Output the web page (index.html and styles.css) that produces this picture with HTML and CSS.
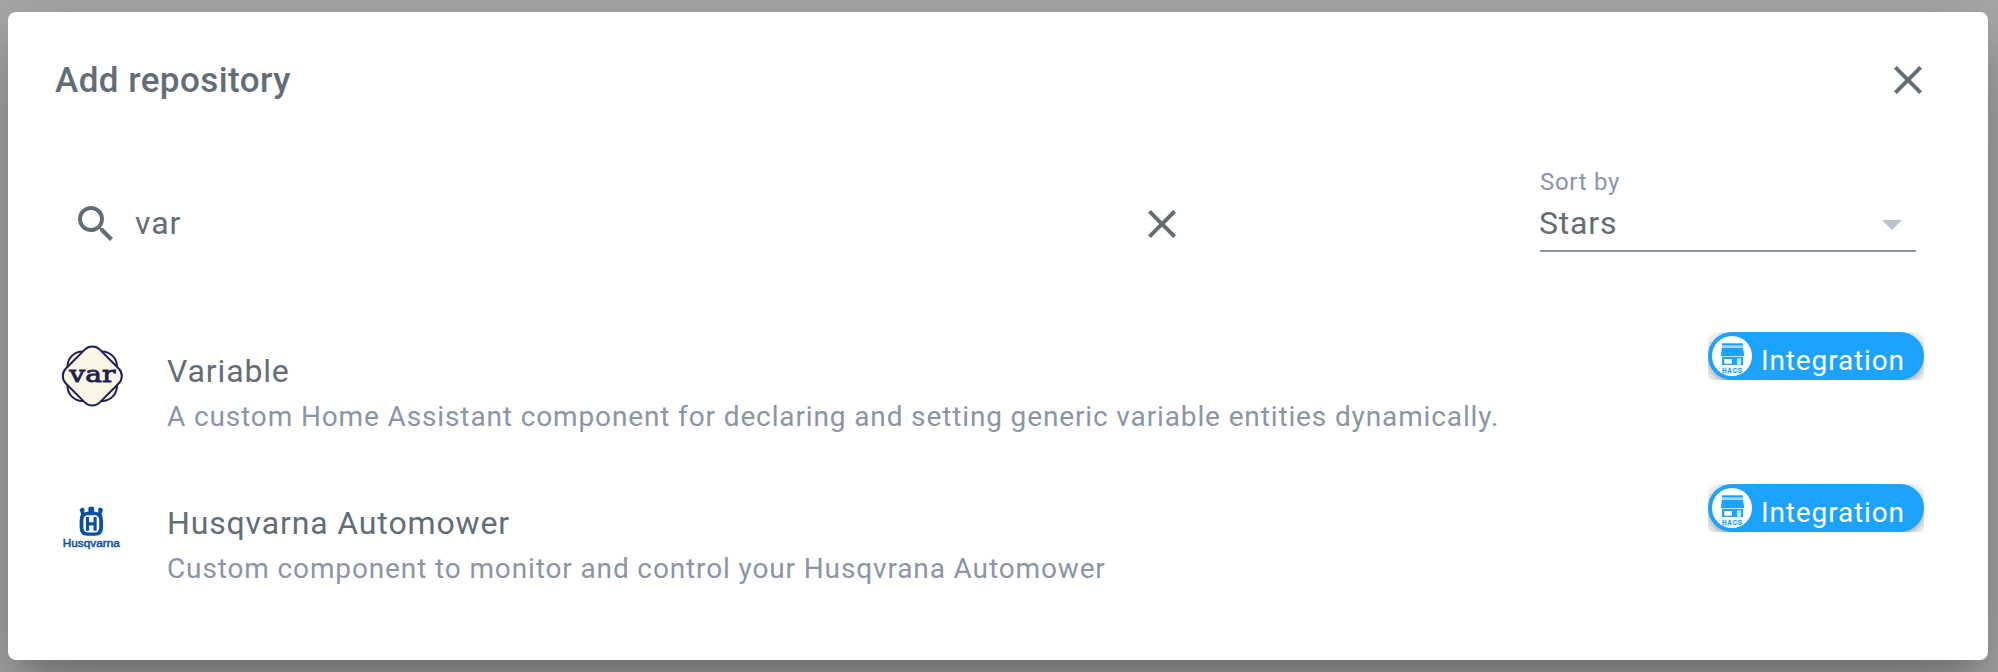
FILE: index.html
```html
<!DOCTYPE html>
<html lang="en">
<head>
<meta charset="utf-8">
<title>Add repository</title>
<link rel="stylesheet" href="styles.css">
</head>
<body>
<svg width="0" height="0" class="symbols" aria-hidden="true">
  <symbol id="close" viewBox="0 0 24 24"><path d="M19,6.41L17.59,5L12,10.59L6.41,5L5,6.41L10.59,12L5,17.59L6.41,19L12,13.41L17.59,19L19,17.59L13.41,12L19,6.41Z"/></symbol>
  <symbol id="store" viewBox="0 0 40 40">
    <circle cx="20" cy="20" r="20" fill="#fff"/>
    <path fill="#1ba3ff" d="M10 7.300h21v2.400H10z"/>
    <path fill="#a3d8ff" d="M10 9.700h21v2.300H10z"/>
    <path fill="#1ba3ff" d="M10 12h21l1 6v2H9v-2z"/>
    <path fill="#1ba3ff" d="M10 21h21v8h-2v-6.500h-4V29H10z"/>
    <path fill="#fff" d="M12.300 23H20v4.700h-7.700z"/>
    <path fill="#a3d8ff" d="M10 20h21v1H10zM25 22.500h4V29h-4z" fill-opacity=".7"/>
  </symbol>
</svg>
<main class="dialog">
  <header class="header">
    <h1 class="title">Add repository</h1>
    <svg class="icon"><use href="#close"/></svg>
  </header>
  <section class="filters">
    <div class="search">
      <svg class="icon" viewBox="0 0 24 24"><path d="M9.5,3A6.5,6.5 0 0,1 16,9.500C16,11.110 15.410,12.590 14.440,13.730L14.710,14H15.500L20.500,19L19,20.500L14,15.500V14.710L13.730,14.440C12.590,15.410 11.110,16 9.500,16A6.500,6.500 0 0,1 3,9.500A6.500,6.500 0 0,1 9.500,3M9.500,5C7,5 5,7 5,9.500C5,12 7,14 9.500,14C12,14 14,12 14,9.500C14,7 12,5 9.500,5Z"/></svg>
      <span class="query">var</span>
      <svg class="icon"><use href="#close"/></svg>
    </div>
    <div class="sort">
      <span class="sort-label">Sort by</span>
      <div class="sort-value"><span>Stars</span><i class="arrow"></i></div>
    </div>
  </section>
  <section class="list">
    <article class="item">
      <svg class="logo" viewBox="0 0 64 64">
        <g fill="#fdf6e6" stroke="#1c2150" stroke-width="2">
          <rect x="7.500" y="7.500" width="49.500" height="49.500" rx="15"/>
          <rect x="8.300" y="8" width="48" height="48" rx="10.700" transform="rotate(45 32.300 32)"/>
        </g>
        <text x="9.300" y="37.500" textLength="46" lengthAdjust="spacingAndGlyphs" class="var-text">var</text>
      </svg>
      <div class="text"><h2 class="name">Variable</h2><p class="desc">A custom Home Assistant component for declaring and setting generic variable entities dynamically.</p></div>
      <div class="badge"><div class="chip"><svg class="chip-icon" viewBox="0 0 40 40"><use href="#store"/><text x="10" y="37.300" textLength="20.700" lengthAdjust="spacingAndGlyphs" class="store-text">HACS</text></svg><span>Integration</span></div></div>
    </article>
    <article class="item">
      <svg class="logo" viewBox="0 0 64 64">
        <path fill="#0b4fa0" d="M19.500 13.500l2.500-2 2.500 1-.3 4 4.300-1-.2-3.500 1-1.200h4l1 1.200-.2 3.500 4.300 1-.3-4 2.500-1 2.500 2-1.600 4.500q1.500 3 1.500 7v6.500q0 8.200-8 8.200h-7.400q-8 0-8-8.200V25q0-4 1.500-7z"/>
        <rect x="23.400" y="19.200" width="15.800" height="17.400" rx="4.500" fill="#fff"/>
        <path d="M27.500 21v13.800M35.100 21v13.800M27.500 27.900h8" stroke="#0b4fa0" stroke-width="3.100" fill="none"/>
        <text x="2.800" y="50.500" textLength="57" lengthAdjust="spacingAndGlyphs" class="husq-text">Husqvarna</text>
      </svg>
      <div class="text"><h2 class="name">Husqvarna Automower</h2><p class="desc">Custom component to monitor and control your Husqvrana Automower</p></div>
      <div class="badge"><div class="chip"><svg class="chip-icon" viewBox="0 0 40 40"><use href="#store"/><text x="10" y="37.300" textLength="20.700" lengthAdjust="spacingAndGlyphs" class="store-text">HACS</text></svg><span>Integration</span></div></div>
    </article>
  </section>
</main>
</body>
</html>
```
FILE: styles.css
```css
* { box-sizing: border-box; }
html { background: #aaa; }
body {
  margin: 0;
  padding: 12px 10px 12px 8px;
  height: 672px;
  overflow: hidden;
  font-family: Roboto, "Liberation Sans", sans-serif;
  color: #636d76;
}
.symbols { position: absolute; }
.dialog {
  height: 648px;
  background: #fff;
  border-radius: 8px;
  box-shadow: 0 22px 30px -14px rgba(0,0,0,.2), 0 48px 76px 6px rgba(0,0,0,.14), 0 18px 92px 16px rgba(0,0,0,.12);
}
.header {
  height: 136px;
  padding: 0 56px 0 47px;
  display: flex;
  align-items: center;
  justify-content: space-between;
}
.title { margin: 2px 0 0; font-size: 35px; font-weight: 500; line-height: 48px; letter-spacing: .45px; }
.icon { width: 48px; height: 48px; fill: #636d76; display: block; }
.filters {
  height: 184px;
  padding: 16px 72px 0 64px;
  display: flex;
  justify-content: space-between;
}
.search { width: 1114px; height: 120px; display: flex; align-items: center; }
.query { flex: 1; padding-left: 15px; font-size: 32px; letter-spacing: .86px; line-height: 48px; margin-top: -2px; }
.sort { width: 376px; height: 88px; border-bottom: 2px solid #8b95a6; }
.sort-label { display: block; color: #8b95a6; font-size: 24px; line-height: 36px; letter-spacing: .7px; }
.sort-value { display: flex; justify-content: space-between; align-items: center; font-size: 32px; line-height: 46px; letter-spacing: .8px; padding-right: 14px; }
.sort-value span { margin-left: -1px; }
.arrow { border: 10px solid transparent; border-top-color: #bac0c8; border-bottom: 0; margin-top: 4px; }
.item { height: 152px; padding: 0 64px 0 52px; display: flex; }
.logo { width: 64px; height: 64px; margin-top: 12px; flex: none; }
.text { flex: 1; padding: 15px 0 0 43px; }
.name { margin: 0; font-size: 32px; font-weight: 400; line-height: 48px; letter-spacing: .86px; }
.desc { margin: 0; font-size: 28px; line-height: 44px; letter-spacing: .87px; color: #8b95a6; white-space: nowrap; }
.badge { width: 216px; height: 48px; overflow: hidden; }
.chip {
  height: 48px;
  border-radius: 24px;
  background: #1ba3ff;
  color: #fff;
  padding-left: 4px;
  display: flex;
  align-items: center;
  gap: 9px;
  font-size: 28px;
  line-height: 40px;
  letter-spacing: .87px;
  box-shadow: 0 4px 8px rgba(0,0,0,.2), 0 2px 16px rgba(0,0,0,.25);
}
.chip span { margin-top: 10px; }
.chip-icon { width: 40px; height: 40px; overflow: visible; }
.store-text { font: bold 7.500px "Liberation Sans", sans-serif; fill: #1ba3ff; stroke: #1ba3ff; stroke-width: .3px; }
.var-text { font: 22px "DejaVu Serif", serif; fill: #1c2150; stroke: #1c2150; stroke-width: .8px; }
.husq-text { font: 11.500px "Liberation Sans", sans-serif; fill: #0b4fa0; stroke: #0b4fa0; stroke-width: .5px; }
```
